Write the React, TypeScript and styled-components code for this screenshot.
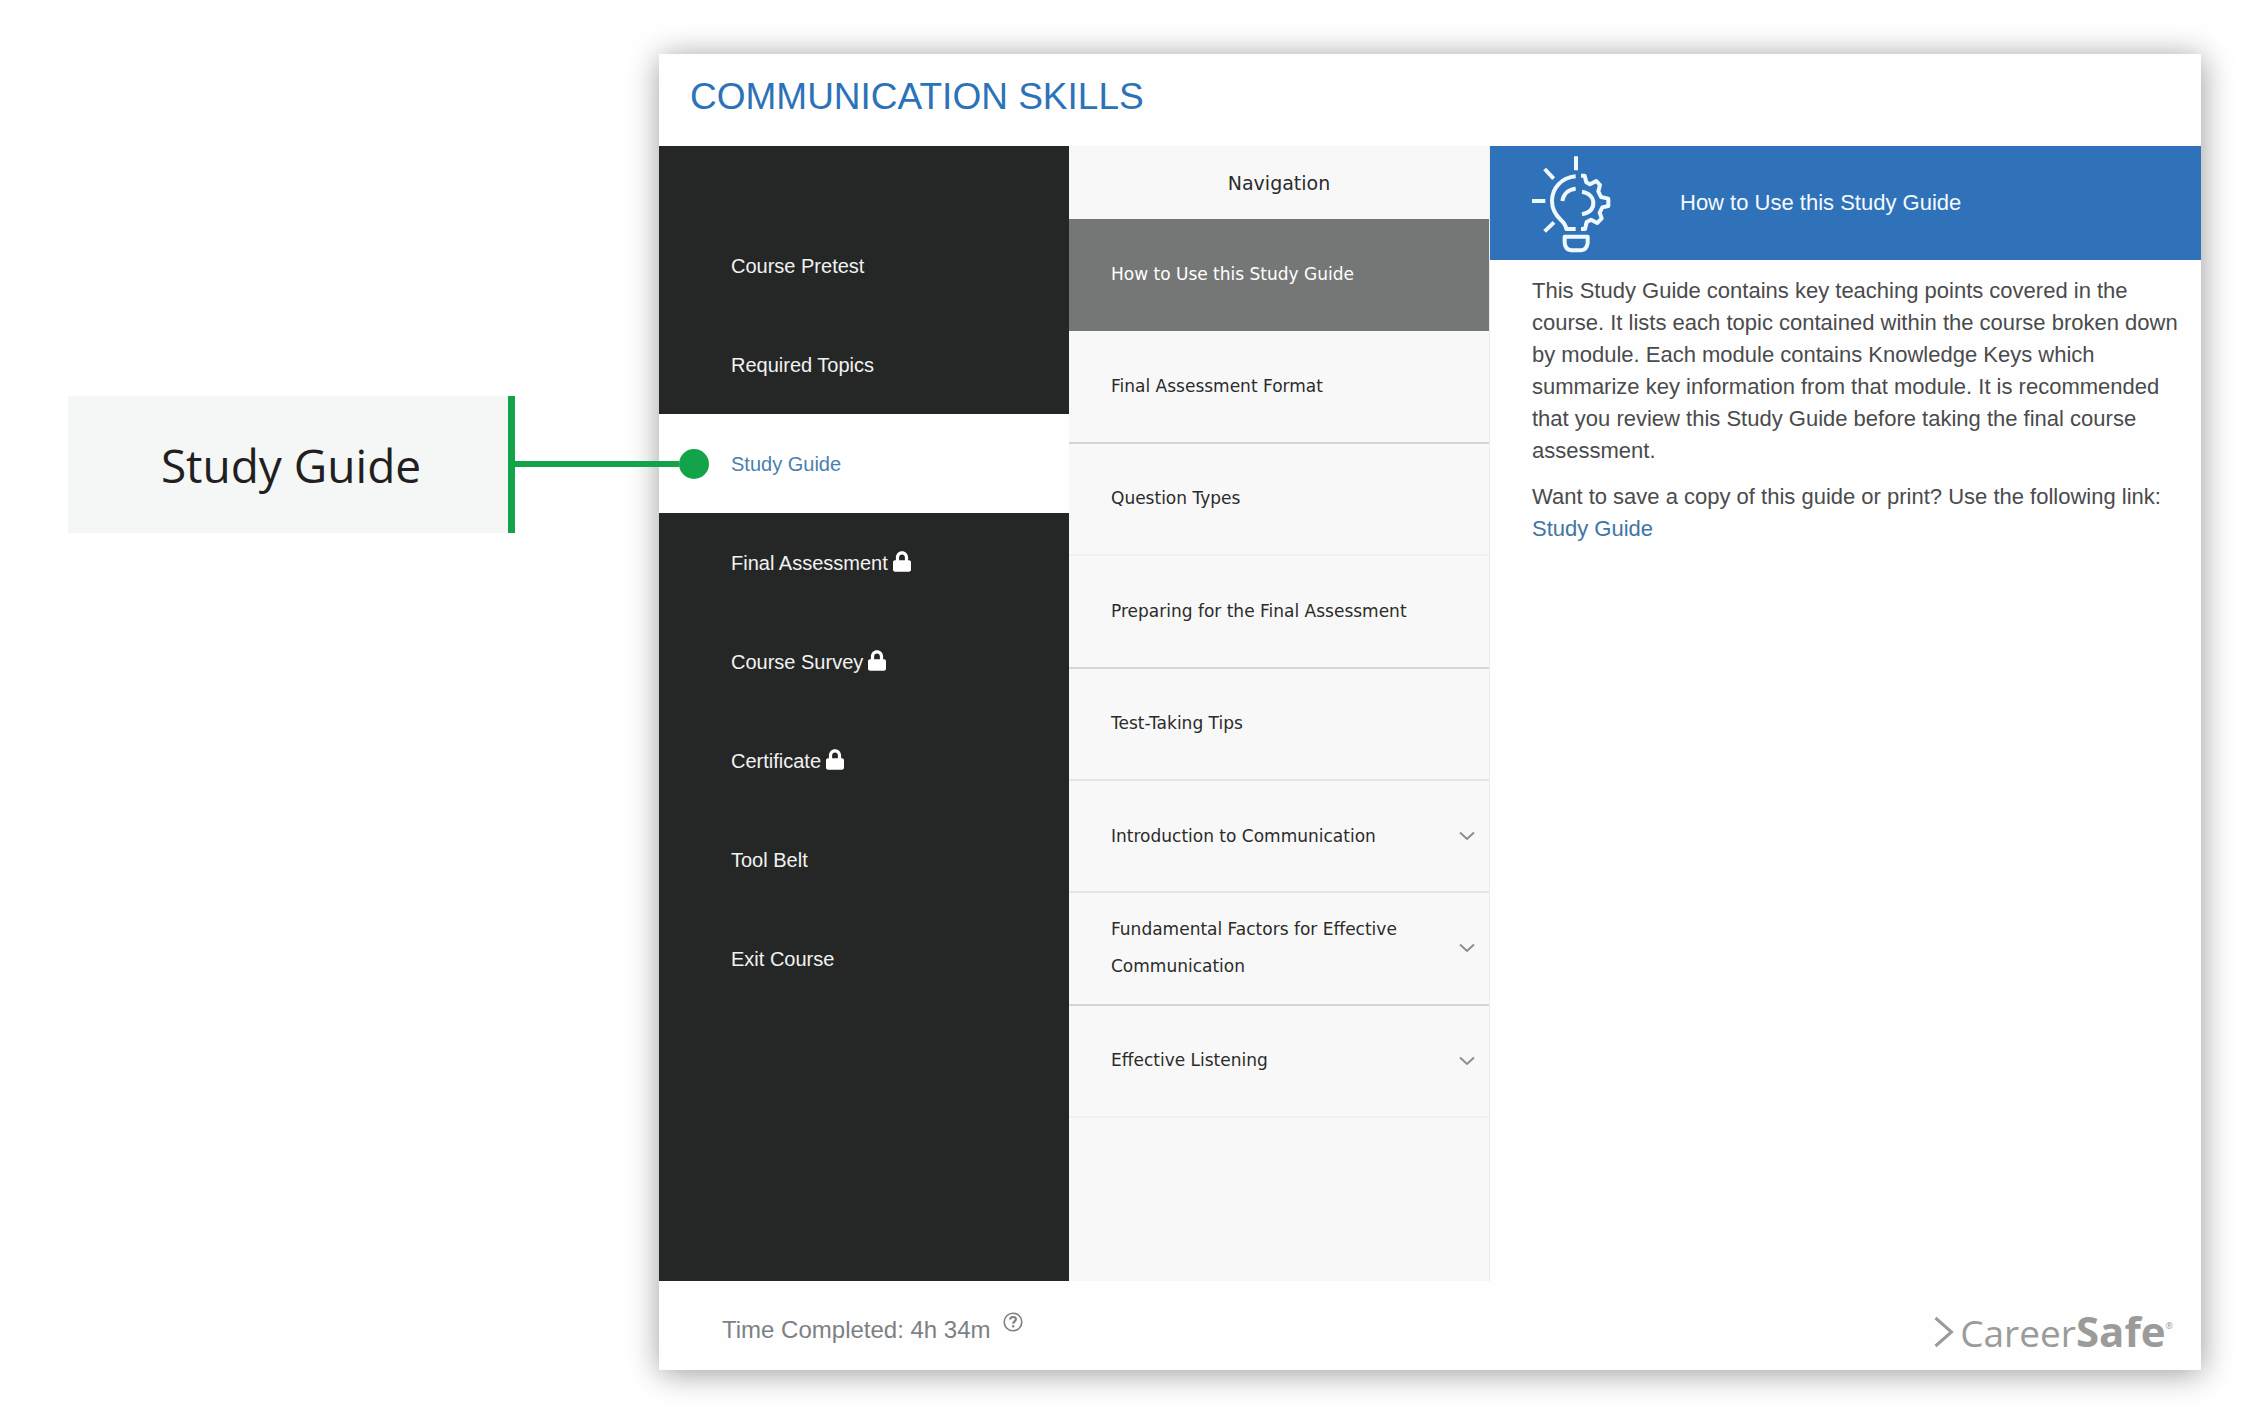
import React from "react";
import styled, { createGlobalStyle } from "styled-components";
import { FaLock } from "react-icons/fa";

const sans = `"Liberation Sans", Arial, sans-serif`;
const wide = `"DejaVu Sans", Verdana, sans-serif`;
const humanist = `"Open Sans", "Noto Sans", sans-serif`;

const GlobalStyle = createGlobalStyle`
  *, *::before, *::after { box-sizing: border-box; }
  body { margin: 0; background: #fff; font-family: ${sans}; }
  button { font: inherit; color: inherit; background: none; border: 0; padding: 0; text-align: left; cursor: pointer; }
  a { color: inherit; text-decoration: none; }
  ul { list-style: none; margin: 0; padding: 0; }
  h1, h2, p { margin: 0; font-weight: 400; }
`;

const Page = styled.div`
  display: flex;
  align-items: flex-start;
  gap: 144px;
  padding: 54px 44px 45px 68px;
`;

const Callout = styled.aside`
  position: relative;
  z-index: 1;
  flex: none;
  width: 447px;
  height: 137px;
  margin-top: 342px;
  display: flex;
  align-items: center;
  justify-content: center;
  background: #f5f7f6;
  border-right: 7px solid #13a44a;
  color: #231f20;
  font-family: ${humanist};
  font-size: 46px;
  line-height: 64px;
`;

const CalloutText = styled.span`
  padding-left: 6px;
`;

const Connector = styled.span`
  position: absolute;
  left: 100%;
  top: 50%;
  width: 194px;
  height: 30px;
  margin-top: -16px;
  margin-left: 7px;
  display: flex;
  align-items: center;

  &::before {
    content: "";
    flex: 1;
    height: 6px;
    background: #13a44a;
  }

  &::after {
    content: "";
    width: 30px;
    height: 30px;
    border-radius: 50%;
    background: #13a44a;
  }
`;

const Card = styled.main`
  flex: 1;
  min-width: 0;
  background: #fefefe;
  box-shadow: 1px 3px 30px rgba(0, 0, 0, 0.4);
`;

const CardHeader = styled.header`
  display: flex;
  align-items: center;
  height: 92px;
  padding: 0 31px 6px;
`;

const CourseTitle = styled.h1`
  color: #2c72b8;
  font-size: 37px;
  line-height: 44px;
`;

const Body = styled.div`
  display: grid;
  grid-template-columns: 410px 421px minmax(0, 1fr);
  min-height: 1135px;
`;

const Sidebar = styled.nav`
  padding-top: 70px;
  background: #252726;
`;

const SidebarItem = styled.button<{ $active?: boolean }>`
  display: flex;
  align-items: center;
  gap: 5px;
  width: 100%;
  height: 99px;
  padding-left: 72px;
  font-size: 20px;
  line-height: 24px;
  color: ${(p) => (p.$active ? "#4a7fae" : "#f2f2f2")};
  background: ${(p) => (p.$active ? "#fff" : "transparent")};

  svg {
    width: 18px;
    height: 21px;
    margin-top: -2px;
    color: #fff;
  }
`;

const TopicPanel = styled.nav`
  background: #f8f8f8;
  border-right: 1px solid #e9eeec;
  font-family: ${wide};
  color: #2b2b2b;
`;

const TopicHeading = styled.h2`
  display: flex;
  align-items: center;
  justify-content: center;
  height: 73px;
  font-size: 19px;
  line-height: 28px;
`;

const TopicList = styled.ul`
  display: grid;
  grid-auto-rows: 1fr;
  height: 899px;
`;

type Tone = "strong" | "soft" | "faint";
const toneColor: Record<Tone, string> = {
  strong: "#d2d5d4",
  soft: "#e2e5e4",
  faint: "#f0f2f1",
};

const TopicButton = styled.button<{ $tone: Tone; $active?: boolean }>`
  display: flex;
  align-items: center;
  justify-content: space-between;
  gap: 40px;
  width: 100%;
  height: 100%;
  padding: 0 14px 0 42px;
  font-size: 17px;
  line-height: 37px;
  color: ${(p) => (p.$active ? "#fff" : "inherit")};
  background: ${(p) => (p.$active ? "#757776" : "transparent")};
  border-bottom: 2px solid ${(p) => (p.$active ? "#757776" : toneColor[p.$tone])};

  svg {
    flex: none;
  }
`;

const Content = styled.section`
  min-width: 0;
`;

const Banner = styled.header`
  display: flex;
  align-items: center;
  gap: 69px;
  height: 114px;
  padding: 2px 0 0 41px;
  background: #3072b9;
  color: #f4fafd;
`;

const BannerTitle = styled.h2`
  padding-bottom: 2px;
  font-size: 22px;
  line-height: 32px;
`;

const Prose = styled.div`
  display: flex;
  flex-direction: column;
  gap: 14px;
  padding: 15px 8px 0 42px;
  color: #4a4b4c;
  font-size: 22px;
  line-height: 32px;
`;

const GuideLink = styled.a`
  display: block;
  color: #3f75a3;
`;

const CardFooter = styled.footer`
  display: flex;
  align-items: center;
  justify-content: space-between;
  height: 89px;
  padding: 8px 28px 0 63px;
`;

const TimeCompleted = styled.p`
  display: flex;
  align-items: center;
  gap: 12px;
  color: #7d8184;
  font-size: 24px;
  line-height: 32px;
`;

const HelpButton = styled.button`
  display: flex;
  padding-bottom: 16px;
`;

const Brand = styled.a`
  display: flex;
  align-items: center;
  gap: 6px;
  padding-top: 4px;
  color: #9b9c9a;
  font-family: ${humanist};
  font-size: 37px;
  line-height: 48px;

  b { font-size: 42px; font-weight: 700; }
  sup { font-size: 9px; line-height: 9px; vertical-align: 18px; }
`;

const BulbIcon = () => (
  <svg width="80" height="98" viewBox="30 44 240 294" fill="none" stroke="#eef9fd" strokeWidth="12" strokeLinejoin="round" aria-hidden="true">
    <path d="M165 48V90M71 86L98 115M33 182H73M71 273L99 246" />
    <path d="M164 108C121 112 93 143 93 182C93 209 106 226 119 238Q134 251 136 266H164" />
    <path d="M124 182C127 162 141 147 164 145" />
    <path d="M183 154C205 158 217 172 217 188C217 206 205 218 183 222" />
    <path d="M180 106H191L196 126L207 132L226 122L237 134L232 153L240 170L262 175V197L244 201L236 217L242 234L229 248L210 238L197 245L192 266H180" />
    <path d="M131 289H200V308Q197 329 180 330H151Q133 328 131 308Z" />
  </svg>
);

const ChevronIcon = () => (
  <svg width="16" height="10" viewBox="0 0 16 10" fill="none" stroke="#8d8f8e" strokeWidth="2" aria-hidden="true">
    <path d="M1 1.5L8 8L15 1.5" />
  </svg>
);

const HelpIcon = () => (
  <svg width="20" height="20" viewBox="0 0 20 20" fill="none" stroke="#7d8184" aria-hidden="true">
    <circle cx="10" cy="10" r="8.8" strokeWidth="1.6" />
    <path d="M7.2 7.6C7.2 5.8 8.4 5 10 5C11.8 5 12.9 6 12.9 7.3C12.9 9.4 10.2 9.2 10.2 11.8" strokeWidth="2.2" />
    <path d="M10.2 13.2V15.4" strokeWidth="2.2" />
  </svg>
);

const BrandMark = () => (
  <svg width="20" height="32" viewBox="0 0 20 32" fill="none" stroke="currentColor" strokeWidth="3" aria-hidden="true">
    <path d="M1.5 2L17.5 16L1.5 30" />
  </svg>
);

const sections: { label: string; locked?: boolean; active?: boolean }[] = [
  { label: "Course Pretest" },
  { label: "Required Topics" },
  { label: "Study Guide", active: true },
  { label: "Final Assessment", locked: true },
  { label: "Course Survey", locked: true },
  { label: "Certificate", locked: true },
  { label: "Tool Belt" },
  { label: "Exit Course" },
];

const topics: { label: string; tone: Tone; active?: boolean; expandable?: boolean }[] = [
  { label: "How to Use this Study Guide", tone: "strong", active: true },
  { label: "Final Assessment Format", tone: "strong" },
  { label: "Question Types", tone: "faint" },
  { label: "Preparing for the Final Assessment", tone: "strong" },
  { label: "Test-Taking Tips", tone: "soft" },
  { label: "Introduction to Communication", tone: "soft", expandable: true },
  { label: "Fundamental Factors for Effective Communication", tone: "strong", expandable: true },
  { label: "Effective Listening", tone: "faint", expandable: true },
];

export default function App() {
  return (
    <>
      <GlobalStyle />
      <Page>
        <Callout>
          <CalloutText>Study Guide</CalloutText>
          <Connector />
        </Callout>
        <Card>
          <CardHeader>
            <CourseTitle>COMMUNICATION SKILLS</CourseTitle>
          </CardHeader>
          <Body>
            <Sidebar>
              <ul>
                {sections.map((s) => (
                  <li key={s.label}>
                    <SidebarItem type="button" $active={s.active}>
                      {s.label}
                      {s.locked && <FaLock aria-hidden="true" />}
                    </SidebarItem>
                  </li>
                ))}
              </ul>
            </Sidebar>
            <TopicPanel>
              <TopicHeading>Navigation</TopicHeading>
              <TopicList>
                {topics.map((t) => (
                  <li key={t.label}>
                    <TopicButton type="button" $tone={t.tone} $active={t.active}>
                      <span>{t.label}</span>
                      {t.expandable && <ChevronIcon />}
                    </TopicButton>
                  </li>
                ))}
              </TopicList>
            </TopicPanel>
            <Content>
              <Banner>
                <BulbIcon />
                <BannerTitle>How to Use this Study Guide</BannerTitle>
              </Banner>
              <Prose>
                <p>
                  This Study Guide contains key teaching points covered in the course. It lists each topic
                  contained within the course broken down by module. Each module contains Knowledge Keys
                  which summarize key information from that module. It is recommended that you review this
                  Study Guide before taking the final course assessment.
                </p>
                <p>
                  Want to save a copy of this guide or print? Use the following link:
                  <GuideLink href="#study-guide">Study Guide</GuideLink>
                </p>
              </Prose>
            </Content>
          </Body>
          <CardFooter>
            <TimeCompleted>
              Time Completed: 4h 34m
              <HelpButton type="button" aria-label="Help">
                <HelpIcon />
              </HelpButton>
            </TimeCompleted>
            <Brand href="#home">
              <BrandMark />
              <span>
                Career<b>Safe</b>
                <sup>®</sup>
              </span>
            </Brand>
          </CardFooter>
        </Card>
      </Page>
    </>
  );
}
